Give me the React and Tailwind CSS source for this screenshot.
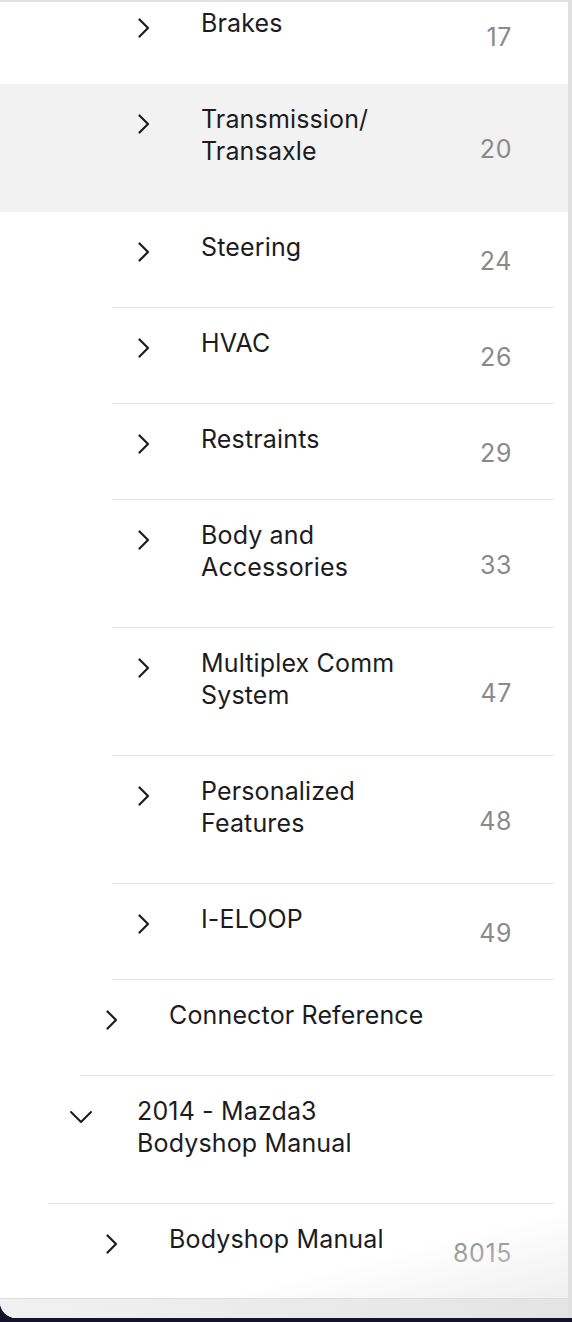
import React from "react";

const rows = [
  { level: 3, lines: ["Brakes"], num: "17", noBorder: true },
  { level: 3, lines: ["Transmission/", "Transaxle"], num: "20", active: true, noBorder: true },
  { level: 3, lines: ["Steering"], num: "24" },
  { level: 3, lines: ["HVAC"], num: "26" },
  { level: 3, lines: ["Restraints"], num: "29" },
  { level: 3, lines: ["Body and", "Accessories"], num: "33" },
  { level: 3, lines: ["Multiplex Comm", "System"], num: "47" },
  { level: 3, lines: ["Personalized", "Features"], num: "48" },
  { level: 3, lines: ["I-ELOOP"], num: "49" },
  { level: 2, lines: ["Connector Reference"], num: "" },
  { level: 1, lines: ["2014 - Mazda3", "Bodyshop Manual"], num: "", open: true },
  { level: 2, lines: ["Bodyshop Manual"], num: "8015", noBorder: true },
];

const indent = { 1: "ml-[48px]", 2: "ml-[80px]", 3: "ml-[112px]" };

function ChevronRight() {
  return (
    <svg width="14" height="20" viewBox="0 0 14 20" className="mt-[11px] ml-[25px] block">
      <path d="M2.5 1.5 L11 10 L2.5 18.5" fill="none" stroke="#1c1c1e" strokeWidth="2.2" strokeLinecap="round" strokeLinejoin="round" />
    </svg>
  );
}

function ChevronDown() {
  return (
    <svg width="24" height="14" viewBox="0 0 24 14" className="mt-[15px] ml-[21px] block">
      <path d="M2 2 L12 12 L22 2" fill="none" stroke="#1c1c1e" strokeWidth="2" strokeLinecap="round" strokeLinejoin="round" />
    </svg>
  );
}

function Row({ r }) {
  return (
    <div className={r.active ? "bg-[#f2f2f2]" : ""}>
      <div
        className={`${indent[r.level]} mr-[14px] flex items-center border-b ${r.noBorder ? "border-transparent" : "border-[#e6e6e6]"}`}
      >
        <div className="flex flex-1 items-start pt-[19px] pb-[44px]">
          <div className="w-[89px] shrink-0">{r.open ? <ChevronDown /> : <ChevronRight />}</div>
          <div className="flex-1 text-[25px] leading-[32px] tracking-[0.15px] text-[#1c1c1e]">
            {r.lines.map((l, i) => (
              <div key={i}>{l}</div>
            ))}
          </div>
        </div>
        {r.num && (
          <div className="mr-[42px] mt-[2px] text-[25px] leading-[32px] tracking-[0.6px] text-[#8a8a8a]">{r.num}</div>
        )}
      </div>
    </div>
  );
}

export default function App() {
  return (
    <div
      className="w-[572px] h-[1322px] bg-[#15132b] overflow-hidden"
      style={{ fontFamily: "Inter, 'Noto Sans', sans-serif" }}
    >
      <div className="relative h-[1318px] flex bg-white rounded-bl-[16px] overflow-hidden">
        <div className="flex-1 flex flex-col min-w-0">
          <div className="h-[2px] bg-[#e4e4e4]" />
          <div className="flex-1 overflow-hidden">
            <div className="-mt-[14px]">
              {rows.map((r, i) => (
                <Row key={i} r={r} />
              ))}
            </div>
          </div>
          <div className="h-[20px] border-t border-[#dcdcdc] bg-gradient-to-r from-[#f1f1f1] to-[#e4e4e4]" />
        </div>
        <div className="w-[4px] bg-[#e0e0e0]" />
        <div className="pointer-events-none absolute right-[4px] bottom-[20px] w-[360px] h-[90px] bg-gradient-to-br from-transparent via-transparent to-[#efefef]" />
      </div>
    </div>
  );
}
